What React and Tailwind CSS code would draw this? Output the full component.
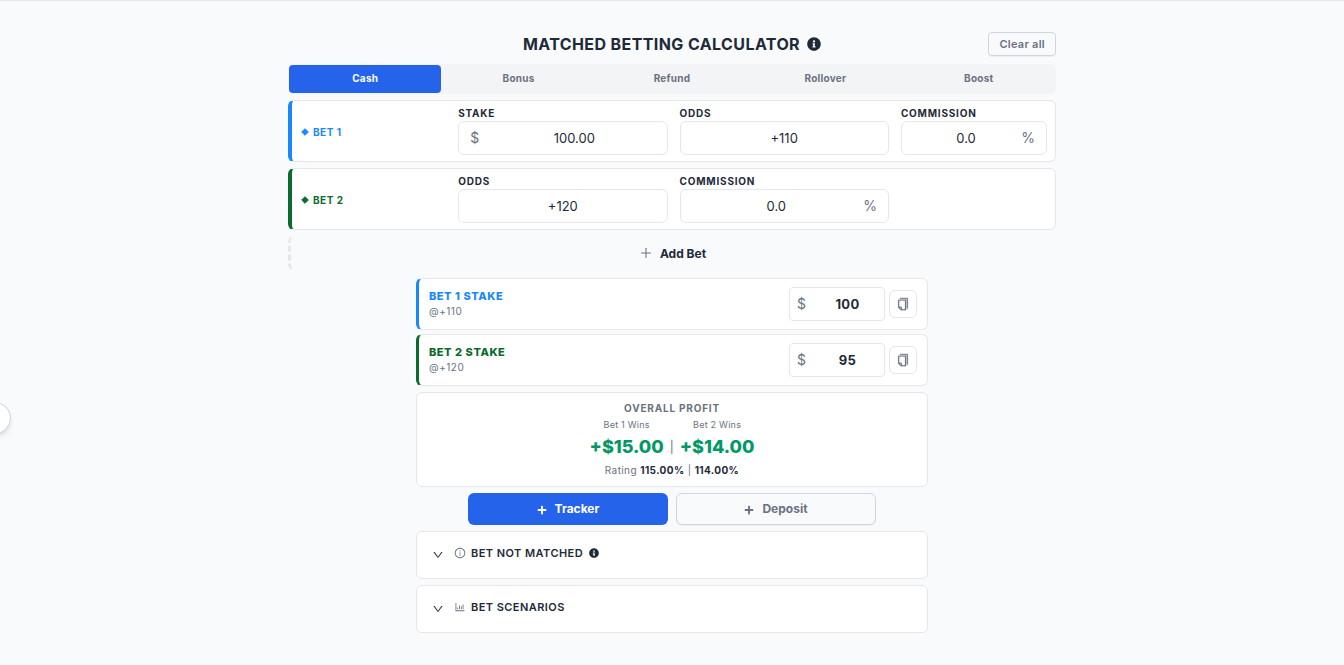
import { useState } from 'react';
import { AiOutlineBarChart, AiOutlineCopy, AiOutlineDown, AiOutlineInfoCircle, AiOutlinePlus } from 'react-icons/ai';
import { FaInfoCircle, FaPlus } from 'react-icons/fa';

const TABS = ['Cash', 'Bonus', 'Refund', 'Rollover', 'Boost'];

const BETS = [
    {
        id: 1,
        border: 'border-l-[#1789fc]',
        text: 'text-[#1789fc]',
        fields: [
            { name: 'Stake', value: '100.00', prefix: '$', span: 'col-span-7' },
            { name: 'Odds', value: '+110', span: 'col-span-7' },
            { name: 'Commission', value: '0.0', suffix: '%', span: 'col-span-5' },
        ],
        odds: '+110',
        stake: '100',
    },
    {
        id: 2,
        border: 'border-l-[#096b2c]',
        text: 'text-[#096b2c]',
        fields: [
            { name: 'Odds', value: '+120', span: 'col-span-7' },
            { name: 'Commission', value: '0.0', suffix: '%', span: 'col-span-7' },
        ],
        odds: '+120',
        stake: '95',
    },
];

const PROFITS = [
    { label: 'Bet 1 Wins', value: '+$15.00' },
    { label: 'Bet 2 Wins', value: '+$14.00' },
];

function Field({ id, name, value, prefix, suffix, span }) {
    return (
        <div className={span}>
            <label htmlFor={id} className="mb-0.5 block text-[10px] leading-3 font-bold tracking-[0.08em] uppercase">
                {name}
            </label>
            <div className="flex h-[34px] items-center rounded-md border border-gray-200 bg-white px-[11px] text-sm">
                {prefix && <span className="mr-3.5 text-gray-500">{prefix}</span>}
                <input id={id} type="text" defaultValue={value} className="w-full min-w-0 text-center text-[13px] outline-none" />
                {suffix && <span className="ml-0.5 text-gray-500">{suffix}</span>}
            </div>
        </div>
    );
}

function BetCard({ bet }) {
    return (
        <div className={`grid grid-cols-24 gap-x-3 rounded-md border border-l-4 border-gray-200 bg-white py-1.5 pr-2 pl-2 ${bet.border}`}>
            <div className={`col-span-5 flex items-center gap-1 pt-0.5 text-[10px] font-bold tracking-wider ${bet.text}`}>
                <svg viewBox="0 0 8 8" className="ml-px size-2" fill="currentColor" stroke="currentColor" strokeLinejoin="round" aria-hidden="true">
                    <path d="M4 .7 7.3 4 4 7.3 .7 4Z" />
                </svg>
                BET {bet.id}
            </div>
            {bet.fields.map((field) => (
                <Field key={field.name} id={`bet-${bet.id}-${field.name.toLowerCase()}`} {...field} />
            ))}
        </div>
    );
}

function StakeResult({ bet }) {
    const inputId = `result-${bet.id}`;

    return (
        <div className={`flex h-[52px] items-center gap-1 rounded-md border border-l-3 border-gray-200 bg-white px-2.5 ${bet.border}`}>
            <div className="flex-1 pb-0.5">
                <label htmlFor={inputId} className={`block text-[11px] leading-4 font-extrabold tracking-wider ${bet.text}`}>
                    BET {bet.id} STAKE
                </label>
                <p className="text-[10px] leading-[14px] tracking-wider text-gray-500">@{bet.odds}</p>
            </div>
            <div className="flex h-[34px] w-24 items-center rounded-sm border border-gray-200 px-[7px] text-sm">
                <span className="mr-3 text-gray-500">$</span>
                <input id={inputId} type="text" defaultValue={bet.stake} className="w-full min-w-0 text-center text-[13px] font-bold tracking-wide outline-none" />
            </div>
            <button aria-label={`Copy bet ${bet.id} stake`} className="flex size-7 items-center justify-center rounded-md border border-gray-200 text-gray-500">
                <AiOutlineCopy size={14} stroke="currentColor" strokeWidth={20} />
            </button>
        </div>
    );
}

function ProfitColumn({ label, value }) {
    return (
        <div className="text-center">
            <p className="text-[9px] leading-4 tracking-wide text-gray-500">{label}</p>
            <p className="text-lg leading-7 font-extrabold text-emerald-600">{value}</p>
        </div>
    );
}

function Panel({ title, icon, info }) {
    const [open, setOpen] = useState(false);

    return (
        <button
            onClick={() => setOpen(!open)}
            aria-expanded={open}
            className="flex h-12 w-full items-center rounded-md border border-gray-200 bg-white px-[15px] pb-1 text-left"
        >
            <AiOutlineDown size={12} className="mt-1 mr-2.5" />
            <span className="mr-[5px] text-gray-500">{icon}</span>
            <span className="text-[11px] font-semibold tracking-[0.04em] uppercase">{title}</span>
            {info && <FaInfoCircle size={10} className="ml-1.5" />}
        </button>
    );
}

function App() {
    const [tab, setTab] = useState('Cash');

    return (
        <div className="min-h-screen overflow-hidden border-t border-gray-200 bg-[#f9fafc] pt-[31px] pb-8 font-['Inter',sans-serif] text-gray-800">
            <button
                aria-label="Open menu"
                className="fixed top-[402px] -left-[21px] size-8 rounded-full border border-gray-300 bg-white shadow-md"
            />
            <main className="mx-auto flex max-w-3xl flex-col">
                <header className="grid grid-cols-[1fr_auto_1fr] items-center">
                    <h1 className="col-start-2 flex items-center gap-[7px] text-base leading-6 font-bold tracking-wide">
                        MATCHED BETTING CALCULATOR
                        <FaInfoCircle size={14} />
                    </h1>
                    <button className="h-6 justify-self-end rounded-sm border border-gray-300 px-2.5 text-[11px] font-semibold tracking-wide text-gray-500 shadow-2xs">
                        Clear all
                    </button>
                </header>

                <div role="tablist" className="mt-2 grid grid-cols-5 gap-px rounded-md bg-gray-100 p-px">
                    {TABS.map((name) => (
                        <button
                            key={name}
                            role="tab"
                            aria-selected={tab === name}
                            onClick={() => setTab(name)}
                            className={`h-7 rounded-sm pb-0.5 text-[10px] font-bold tracking-wide ${tab === name ? 'bg-[#2563eb] text-white' : 'text-gray-500'}`}
                        >
                            {name}
                        </button>
                    ))}
                </div>

                <section className="mt-1.5 flex flex-col gap-1.5">
                    {BETS.map((bet) => <BetCard key={bet.id} bet={bet} />)}
                    <button className="flex h-[34px] items-center justify-center gap-[7px] rounded-md border-l-3 border-dashed border-gray-200 pt-0.5 pr-0.5 text-xs font-bold">
                        <AiOutlinePlus size={14} className="mb-0.5 text-gray-500" />
                        Add Bet
                    </button>
                </section>

                <section className="mx-auto mt-2 flex w-full max-w-lg flex-col gap-1.5">
                    <div className="flex flex-col gap-1">
                        {BETS.map((bet) => <StakeResult key={bet.id} bet={bet} />)}
                    </div>

                    <div className="flex flex-col items-center rounded-md border border-gray-200 bg-white pt-[7px] pb-2">
                        <h2 className="mb-px text-[10px] leading-4 font-bold tracking-[0.08em] text-gray-500">OVERALL PROFIT</h2>
                        <div className="flex items-end gap-1.5">
                            <ProfitColumn {...PROFITS[0]} />
                            <span className="text-xs leading-7 text-gray-500">|</span>
                            <ProfitColumn {...PROFITS[1]} />
                        </div>
                        <p className="mt-px text-[10px] leading-4 tracking-[0.04em] text-gray-500">
                            Rating <strong className="text-gray-800">115.00%</strong> | <strong className="text-gray-800">114.00%</strong>
                        </p>
                    </div>

                    <div className="flex justify-center gap-2 text-xs font-bold">
                        <button className="flex h-8 w-50 items-center justify-center gap-2 rounded-md bg-[#2563eb] text-white">
                            <FaPlus size={10} className="mt-0.5" />
                            Tracker
                        </button>
                        <button className="flex h-8 w-50 items-center justify-center gap-2 rounded-md border border-gray-300 text-gray-500 shadow-2xs">
                            <FaPlus size={10} className="mt-0.5" />
                            Deposit
                        </button>
                    </div>

                    <Panel title="Bet not matched" icon={<AiOutlineInfoCircle size={12} />} info />
                    <Panel title="Bet scenarios" icon={<AiOutlineBarChart size={12} />} />
                </section>
            </main>
        </div>
    );
}

export default App;
